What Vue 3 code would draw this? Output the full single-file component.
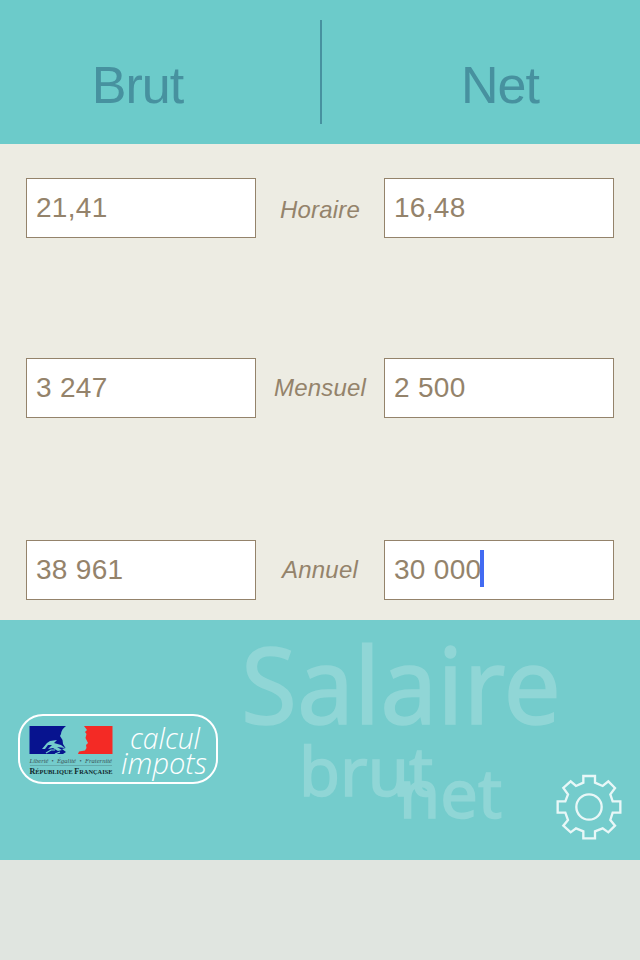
<script setup>
import { ref } from 'vue'

const rows = ref([
  { id: 'horaire', label: 'Horaire', brut: '21,41', net: '16,48' },
  { id: 'mensuel', label: 'Mensuel', brut: '3 247', net: '2 500' },
  { id: 'annuel', label: 'Annuel', brut: '38 961', net: '30 000' }
])

const active = ref('annuel')
</script>

<template>
  <div class="app">
    <header class="header">
      <h1 class="title title-brut">Brut</h1>
      <div class="divider"></div>
      <h1 class="title title-net">Net</h1>
    </header>

    <main class="form">
      <div v-for="row in rows" :key="row.id" class="row" :class="row.id">
        <input v-model="row.brut" class="field" />
        <label class="label">{{ row.label }}</label>
        <div class="field-wrap">
          <input v-model="row.net" class="field" />
          <span v-if="active === row.id" class="caret"></span>
        </div>
      </div>
    </main>

    <section class="banner">
      <svg class="watermark" viewBox="0 0 640 240">
        <g fill="#fff" stroke="#fff" stroke-width="1.500" opacity="0.2">
          <text x="241" y="104" font-size="106" textLength="320" lengthAdjust="spacingAndGlyphs">Salaire</text>
          <text x="299" y="176" font-size="68" textLength="134" lengthAdjust="spacingAndGlyphs">brut</text>
          <text x="399" y="198" font-size="68" textLength="103" lengthAdjust="spacingAndGlyphs">net</text>
        </g>
      </svg>

      <button class="badge">
        <svg class="badge-art" viewBox="0 0 196 66">
          <!-- flag with Marianne profile -->
          <path
            fill="#07138f"
            d="M9.500 10H46Q41.500 13 41 18L40 20 42.500 24 43 28 45.500 32 42 33 46 36 43 38H9.500Z"
          />
          <path
            fill="#74cccc"
            d="M22 33 27 27 30 25 37 24 34 27 41 29 45 32 37 31 42 34 38 35 33 32 28 33 32 29 28 29 25 33Z"
          />
          <path fill="none" stroke="#74cccc" stroke-width="1.200" d="M26 37 31 34 35 34M35 38 40 36" />
          <path
            fill="#f42a25"
            d="M64 10H92.500V38H58L59 35.500 65 34.500 66.500 32 66 29 68 27 65.500 22 66.500 18 65 16 67 14Z"
          />
          <g class="motto" fill="#3c5558">
            <text x="9.500" y="46.500" textLength="19" lengthAdjust="spacingAndGlyphs">Liberté</text>
            <text x="31.500" y="46.500">•</text>
            <text x="37" y="46.500" textLength="19" lengthAdjust="spacingAndGlyphs">Égalité</text>
            <text x="59.500" y="46.500">•</text>
            <text x="65" y="46.500" textLength="27" lengthAdjust="spacingAndGlyphs">Fraternité</text>
          </g>
          <path stroke="#5d9c9e" stroke-width="0.700" d="M10 49.500H92" />
          <text class="republic" x="9.500" y="58" textLength="83" lengthAdjust="spacingAndGlyphs"><tspan font-size="7.500">R</tspan>ÉPUBLIQUE <tspan font-size="7.500">F</tspan>RANÇAISE</text>
          <g class="brand" fill="#fff">
            <text x="110" y="33" textLength="70" lengthAdjust="spacingAndGlyphs">calcul</text>
            <text x="101" y="57.500" textLength="86" lengthAdjust="spacingAndGlyphs">impots</text>
          </g>
        </svg>
      </button>

      <button class="settings">
        <svg viewBox="48 42 198 198" fill="none" stroke="#e8f7f7" stroke-width="7">
          <path
            d="M130 48H165V68L188 78 205 64 225 84 211 103 218 124H241V158H218L211 180 225 197 205 217 188 205 165 214V235H130V214L108 205 92 217 70 197 84 180 76 158H53V124H76L84 103 70 84 92 64 108 78 130 68Z"
          />
          <circle cx="147" cy="141" r="38" />
        </svg>
      </button>
    </section>

    <footer class="footer"></footer>
  </div>
</template>

<style>
body {
  margin: 0;
}
</style>

<style scoped>
.app {
  display: flex;
  flex-direction: column;
  width: 640px;
  height: 960px;
  overflow: hidden;
  font-family: 'Liberation Sans', Arial, sans-serif;
  background-color: #edece3;
}

.header {
  display: grid;
  grid-template-columns: 320px 2px 318px;
  box-sizing: border-box;
  height: 144px;
  padding: 20px 0;
  background-color: #6ccbca;
  color: #47919f;
}

.title {
  margin: 0;
  padding-top: 36px;
  font-size: 52px;
  font-weight: normal;
  line-height: 58px;
  letter-spacing: -1px;
  text-align: center;
}

.title-brut {
  padding-right: 45px;
}

.title-net {
  padding-left: 38px;
}

.divider {
  height: 104px;
  background-color: #47919f;
}

.form {
  display: grid;
  grid-template-rows: 180px 182px 60px;
  box-sizing: border-box;
  height: 476px;
  padding: 34px 26px 20px;
  color: #94836b;
}

.row {
  display: grid;
  grid-template-columns: 230px 128px 230px;
  height: 60px;
}

.field-wrap {
  position: relative;
}

.field {
  display: block;
  box-sizing: border-box;
  width: 230px;
  height: 60px;
  padding: 0 9px;
  border: 1px solid #94836b;
  border-radius: 0;
  outline: none;
  background-color: #fff;
  color: #94836b;
  font-family: inherit;
  font-size: 28px;
  letter-spacing: 0.3px;
}

.caret {
  position: absolute;
  left: 96px;
  top: 10px;
  width: 4px;
  height: 37px;
  background-color: #426bf2;
}

.label {
  font-size: 24px;
  font-style: italic;
  line-height: 60px;
  letter-spacing: 0.2px;
  text-align: center;
}

.horaire .label {
  line-height: 64px;
}

.banner {
  position: relative;
  display: flex;
  justify-content: space-between;
  box-sizing: border-box;
  height: 240px;
  padding: 94px 18px 0;
  background-color: #74cccc;
}

.watermark {
  position: absolute;
  left: 0;
  top: 0;
  width: 640px;
  height: 240px;
  font-family: 'Noto Sans', 'Open Sans', sans-serif;
}

.badge {
  position: relative;
  box-sizing: border-box;
  width: 200px;
  height: 70px;
  padding: 0;
  border: 2px solid #fff;
  border-radius: 25px;
  background: none;
}

.badge-art {
  display: block;
  width: 196px;
  height: 66px;
}

.motto {
  font-family: 'Liberation Serif', serif;
  font-size: 6px;
  font-style: italic;
}

.republic {
  fill: #10282b;
  font-family: 'Liberation Serif', serif;
  font-size: 6px;
  font-weight: bold;
}

.brand {
  font-family: 'Open Sans', sans-serif;
  font-size: 30px;
  font-style: italic;
  font-weight: 300;
}

.settings {
  position: relative;
  width: 66px;
  height: 66px;
  margin-top: 60px;
  padding: 0;
  border: none;
  background: none;
}

.settings svg {
  display: block;
  width: 66px;
  height: 66px;
}

.footer {
  flex: 1;
  background-color: #e0e5e0;
}
</style>
